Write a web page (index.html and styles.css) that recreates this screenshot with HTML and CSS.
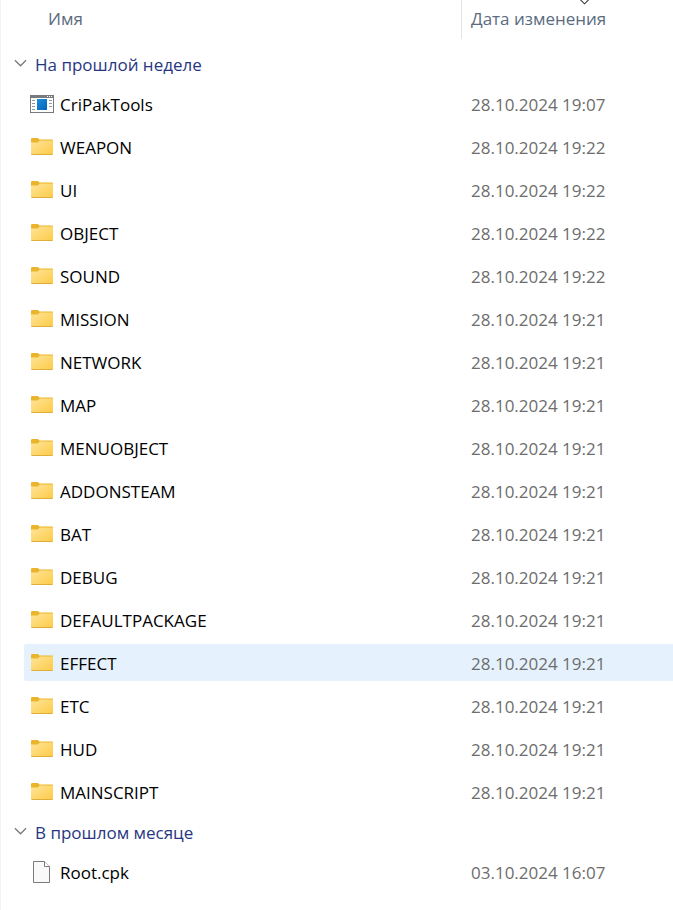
FILE: index.html
```html
<!DOCTYPE html>
<html lang="ru">
<head>
<meta charset="utf-8">
<title>CriPakTools</title>
<link rel="stylesheet" href="styles.css">
</head>
<body>
<svg class="defs" aria-hidden="true">
  <defs>
    <linearGradient id="folder-fill" x1="0" y1="0" x2="1" y2="1">
      <stop offset="0" stop-color="#ffe59a"/>
      <stop offset="1" stop-color="#fcca45"/>
    </linearGradient>
    <linearGradient id="app-fill" x1="0" y1="0" x2="1" y2="1">
      <stop offset="0" stop-color="#1b8de0"/>
      <stop offset="1" stop-color="#0764b4"/>
    </linearGradient>
    <symbol id="folder" viewBox="0 0 24 24">
      <path d="M1 4.200Q1 3 2.200 3H8L9.500 4.500H22.200Q23 4.500 23 5.300V10H1Z" fill="#eab52c"/>
      <path d="M1 7.500H8L9.700 5.500H23V19Q23 20 22 20H2Q1 20 1 19Z" fill="url(#folder-fill)"/>
      <path d="M1.500 19.500H22.500" stroke="#dfae3a" fill="none"/>
    </symbol>
    <symbol id="app" viewBox="0 0 24 24">
      <rect x=".5" y="3.500" width="23" height="17" fill="#fff" stroke="#777b80"/>
      <path d="M0 3H24V6H0Z" fill="#777b80"/>
      <path d="M17 4.500H18M19 4.500H20M21 4.500H22" stroke="#fff"/>
      <path d="M2 8.500H5M2 11.500H5M2 14.500H5M2 17.500H5M19 8.500H22M19 11.500H22M19 14.500H22" stroke="#92969a"/>
      <rect x="7" y="7" width="10" height="11" fill="url(#app-fill)"/>
    </symbol>
    <symbol id="file" viewBox="0 0 24 24">
      <path d="M3.500 1.500H14.500L19.500 6.500V22.500H3.500Z" fill="#f9f9f9" stroke="#7b7b7b"/>
      <path d="M14.500 1.500V6.500H19.500" fill="#fff" stroke="#7b7b7b"/>
    </symbol>
    <symbol id="chevron" viewBox="0 0 14 8">
      <path d="M1 1L7 7L13 1" fill="none" stroke="currentColor" stroke-width="1.300"/>
    </symbol>
  </defs>
</svg>
<table class="files">
  <colgroup><col class="col-name"><col></colgroup>
  <thead>
    <tr>
      <th scope="col"><button class="head head-name" type="button">Имя</button></th>
      <th scope="col"><button class="head head-date" type="button">Дата изменения<svg class="sort"><use href="#chevron"/></svg></button></th>
    </tr>
  </thead>
  <tbody>
    <tr><th colspan="2" scope="rowgroup"><button class="group" type="button"><svg class="chevron"><use href="#chevron"/></svg>На прошлой неделе</button></th></tr>
    <tr class="item"><td><div class="name"><svg class="icon"><use href="#app"/></svg>CriPakTools</div></td><td><div class="date">28.10.2024 19:07</div></td></tr>
    <tr class="item"><td><div class="name"><svg class="icon"><use href="#folder"/></svg>WEAPON</div></td><td><div class="date">28.10.2024 19:22</div></td></tr>
    <tr class="item"><td><div class="name"><svg class="icon"><use href="#folder"/></svg>UI</div></td><td><div class="date">28.10.2024 19:22</div></td></tr>
    <tr class="item"><td><div class="name"><svg class="icon"><use href="#folder"/></svg>OBJECT</div></td><td><div class="date">28.10.2024 19:22</div></td></tr>
    <tr class="item"><td><div class="name"><svg class="icon"><use href="#folder"/></svg>SOUND</div></td><td><div class="date">28.10.2024 19:22</div></td></tr>
    <tr class="item"><td><div class="name"><svg class="icon"><use href="#folder"/></svg>MISSION</div></td><td><div class="date">28.10.2024 19:21</div></td></tr>
    <tr class="item"><td><div class="name"><svg class="icon"><use href="#folder"/></svg>NETWORK</div></td><td><div class="date">28.10.2024 19:21</div></td></tr>
    <tr class="item"><td><div class="name"><svg class="icon"><use href="#folder"/></svg>MAP</div></td><td><div class="date">28.10.2024 19:21</div></td></tr>
    <tr class="item"><td><div class="name"><svg class="icon"><use href="#folder"/></svg>MENUOBJECT</div></td><td><div class="date">28.10.2024 19:21</div></td></tr>
    <tr class="item"><td><div class="name"><svg class="icon"><use href="#folder"/></svg>ADDONSTEAM</div></td><td><div class="date">28.10.2024 19:21</div></td></tr>
    <tr class="item"><td><div class="name"><svg class="icon"><use href="#folder"/></svg>BAT</div></td><td><div class="date">28.10.2024 19:21</div></td></tr>
    <tr class="item"><td><div class="name"><svg class="icon"><use href="#folder"/></svg>DEBUG</div></td><td><div class="date">28.10.2024 19:21</div></td></tr>
    <tr class="item"><td><div class="name"><svg class="icon"><use href="#folder"/></svg>DEFAULTPACKAGE</div></td><td><div class="date">28.10.2024 19:21</div></td></tr>
    <tr class="item active"><td><div class="name"><svg class="icon"><use href="#folder"/></svg>EFFECT</div></td><td><div class="date">28.10.2024 19:21</div></td></tr>
    <tr class="item"><td><div class="name"><svg class="icon"><use href="#folder"/></svg>ETC</div></td><td><div class="date">28.10.2024 19:21</div></td></tr>
    <tr class="item"><td><div class="name"><svg class="icon"><use href="#folder"/></svg>HUD</div></td><td><div class="date">28.10.2024 19:21</div></td></tr>
    <tr class="item"><td><div class="name"><svg class="icon"><use href="#folder"/></svg>MAINSCRIPT</div></td><td><div class="date">28.10.2024 19:21</div></td></tr>
  </tbody>
  <tbody>
    <tr><th colspan="2" scope="rowgroup"><button class="group" type="button"><svg class="chevron"><use href="#chevron"/></svg>В прошлом месяце</button></th></tr>
    <tr class="item"><td><div class="name"><svg class="icon"><use href="#file"/></svg>Root.cpk</div></td><td><div class="date">03.10.2024 16:07</div></td></tr>
  </tbody>
</table>
</body>
</html>
```
FILE: styles.css
```css
* {
  box-sizing: border-box;
}

body {
  margin: 0;
  min-height: 100vh;
  background: #fff;
  box-shadow: inset 1px 0 #f3f3f3;
  color: #000;
  font: 17px/24px "Open Sans", "Noto Sans", sans-serif;
}

.defs {
  position: absolute;
  width: 0;
  height: 0;
}

.files {
  width: 100%;
  table-layout: fixed;
  border-collapse: collapse;
}

.col-name {
  width: 461px;
}

th,
td {
  padding: 0;
  font-weight: 400;
  text-align: left;
  vertical-align: top;
}

thead th {
  padding-bottom: 9px;
}

button {
  display: flex;
  align-items: center;
  width: 100%;
  margin: 0;
  border: 0;
  background: none;
  font: inherit;
  text-align: left;
}

.head {
  position: relative;
  height: 39px;
  padding: 0 0 2px;
  color: #5a6b80;
}

.head-name {
  padding-left: 48px;
}

.head-date {
  padding-left: 9px;
  border-left: 1px solid #e3e3e3;
}

.sort {
  position: absolute;
  top: -2px;
  left: 117px;
  width: 11px;
  height: 7px;
  color: #333;
}

.group {
  gap: 8px;
  height: 37px;
  padding: 0 0 4px 14px;
  color: #27377f;
}

.chevron {
  width: 13px;
  height: 8px;
  margin-bottom: 3px;
  color: #777;
}

.item td {
  padding-bottom: 6px;
}

.name,
.date {
  display: flex;
  align-items: center;
  height: 37px;
  padding-top: 2px;
}

.name {
  gap: 6px;
  margin-left: 24px;
  padding-left: 6px;
  border-radius: 2px 0 0 2px;
}

.date {
  padding-left: 10px;
  color: #6d6d6d;
}

.active .name,
.active .date {
  background: #e5f2fd;
}

.icon {
  width: 24px;
  height: 24px;
  margin-bottom: 2px;
}
```
